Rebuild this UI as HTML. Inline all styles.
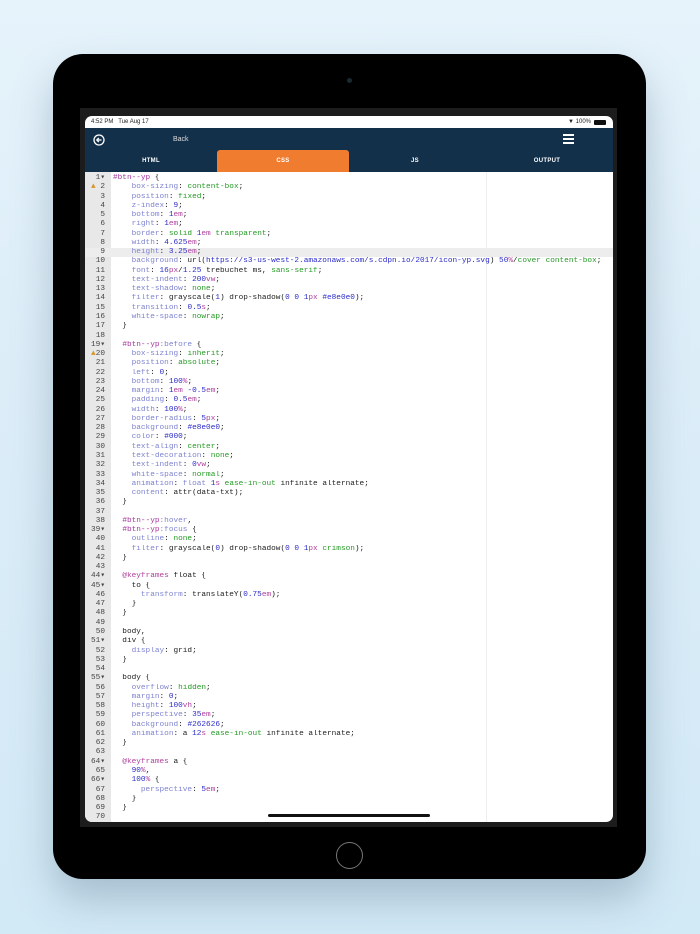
<!DOCTYPE html>
<html><head><meta charset="utf-8"><style>
*{margin:0;padding:0;box-sizing:border-box}
body{width:700px;height:934px;overflow:hidden;background:linear-gradient(180deg,#e6f3fb 0%,#dcedf8 40%,#d2e9f6 100%);font-family:"Liberation Sans",sans-serif;position:relative}
.tab{position:absolute;left:53px;top:54px;width:593px;height:825px;background:#000;border-radius:30px;box-shadow:0 20px 40px rgba(80,110,130,.35)}
.cam{position:absolute;left:347px;top:78px;width:5px;height:5px;border-radius:50%;background:#1a2a30}
.bez{position:absolute;left:80px;top:108px;width:537px;height:719px;background:#1c1c1c}
.scr{position:absolute;left:85px;top:116px;width:528px;height:706px;background:#fff;border-radius:7px;overflow:hidden}
.status{height:12px;font-size:6px;color:#222;line-height:12px;padding-left:6px;position:relative}
.nav{position:absolute;top:12px;left:0;width:528px;height:44px;background:#12304a}
.tabs span{position:absolute;top:22px;height:22px;line-height:22px;text-align:center;color:#fff;font-size:6px;font-weight:bold;letter-spacing:.3px}
.gut{position:absolute;left:0;top:56px;width:26px;height:650px;background:#e8e8e8}
.code{position:absolute;left:0;top:58px;width:528px;font-family:"Liberation Mono",monospace;font-size:7.75px;line-height:9.275px;color:#222}
.code div{height:9.275px;position:relative;white-space:pre;overflow:hidden}
.code i{font-style:normal;display:inline-block;width:20px;text-align:right;color:#444;margin-right:8px}
.code b{font-weight:normal}
.p{color:#7f84d0}.v{color:#259a25}.n{color:#2a2ac8}.u{color:#b0409c}.s{color:#a6379f}
.hl{background:#ededed}
.vl{position:absolute;left:401px;top:56px;width:1px;height:650px;background:#eee}
.home{position:absolute;left:336px;top:842px;width:27px;height:27px;border-radius:50%;border:1.5px solid #777}
.bar{position:absolute;left:183px;top:698px;width:162px;height:3px;border-radius:2px;background:#111}
</style></head><body>
<div class="tab"></div>
<div class="cam"></div>
<div class="bez"></div>
<div class="scr">
<div class="status">4:52 PM&nbsp;&nbsp; Tue Aug 17<span style="position:absolute;right:22px">&#9660; 100%</span><span style="position:absolute;right:7px;top:4px;width:12px;height:5px;background:#111;border-radius:1px"></span></div>
<div class="nav">
<svg style="position:absolute;left:8px;top:6px" width="12" height="12" viewBox="0 0 12 12"><circle cx="6" cy="6" r="5" fill="none" stroke="#fff" stroke-width="1.3"/><path d="M8.5 6H4M5.8 4L3.8 6L5.8 8" fill="none" stroke="#fff" stroke-width="1.3"/></svg>
<span style="position:absolute;left:88px;top:8px;color:#ddd;font-size:7px">Back</span>
<svg style="position:absolute;left:478px;top:6px" width="11" height="10"><rect y="0" width="11" height="2" fill="#fff"/><rect y="4" width="11" height="2" fill="#fff"/><rect y="8" width="11" height="2" fill="#fff"/></svg>
<div class="tabs">
<span style="left:0;width:132px">HTML</span>
<span style="left:132px;width:132px;background:#f07c30;border-radius:3px 3px 0 0">CSS</span>
<span style="left:264px;width:132px">JS</span>
<span style="left:396px;width:132px">OUTPUT</span>
</div></div>
<div class="gut"></div>
<div class="vl"></div>
<div class="code">
<div><i>1▾</i><b class="s">#btn--yp</b> {</div>
<div><i><span style="color:#d9962a">▲</span> 2</i>    <b class="p">box-sizing</b>: <b class="v">content-box</b>;</div>
<div><i>3</i>    <b class="p">position</b>: <b class="v">fixed</b>;</div>
<div><i>4</i>    <b class="p">z-index</b>: <b class="n">9</b>;</div>
<div><i>5</i>    <b class="p">bottom</b>: <b class="n">1</b><b class="u">em</b>;</div>
<div><i>6</i>    <b class="p">right</b>: <b class="n">1</b><b class="u">em</b>;</div>
<div><i>7</i>    <b class="p">border</b>: <b class="v">solid</b> <b class="n">1</b><b class="u">em</b> <b class="v">transparent</b>;</div>
<div><i>8</i>    <b class="p">width</b>: <b class="n">4.625</b><b class="u">em</b>;</div>
<div class="hl"><i>9</i>    <b class="p">height</b>: <b class="n">3.25</b><b class="u">em</b>;</div>
<div><i>10</i>    <b class="p">background</b>: url(<b class="n">https://s3-us-west-2.amazonaws.com/s.cdpn.io/2017/icon-yp.svg</b>) <b class="n">50</b><b class="u">%</b>/<b class="v">cover content-box</b>;</div>
<div><i>11</i>    <b class="p">font</b>: <b class="n">16</b><b class="u">px</b>/<b class="n">1.25</b> trebuchet ms, <b class="v">sans-serif</b>;</div>
<div><i>12</i>    <b class="p">text-indent</b>: <b class="n">200</b><b class="u">vw</b>;</div>
<div><i>13</i>    <b class="p">text-shadow</b>: <b class="v">none</b>;</div>
<div><i>14</i>    <b class="p">filter</b>: grayscale(<b class="n">1</b>) drop-shadow(<b class="n">0 0 1</b><b class="u">px</b> <b class="n">#e8e0e0</b>);</div>
<div><i>15</i>    <b class="p">transition</b>: <b class="n">0.5</b><b class="u">s</b>;</div>
<div><i>16</i>    <b class="p">white-space</b>: <b class="v">nowrap</b>;</div>
<div><i>17</i>  }</div>
<div><i>18</i></div>
<div><i>19▾</i>  <b class="s">#btn--yp</b><b class="p">:before</b> {</div>
<div><i><span style="color:#d9962a">▲</span>20</i>    <b class="p">box-sizing</b>: <b class="v">inherit</b>;</div>
<div><i>21</i>    <b class="p">position</b>: <b class="v">absolute</b>;</div>
<div><i>22</i>    <b class="p">left</b>: <b class="n">0</b>;</div>
<div><i>23</i>    <b class="p">bottom</b>: <b class="n">100</b><b class="u">%</b>;</div>
<div><i>24</i>    <b class="p">margin</b>: <b class="n">1</b><b class="u">em</b> <b class="n">-0.5</b><b class="u">em</b>;</div>
<div><i>25</i>    <b class="p">padding</b>: <b class="n">0.5</b><b class="u">em</b>;</div>
<div><i>26</i>    <b class="p">width</b>: <b class="n">100</b><b class="u">%</b>;</div>
<div><i>27</i>    <b class="p">border-radius</b>: <b class="n">5</b><b class="u">px</b>;</div>
<div><i>28</i>    <b class="p">background</b>: <b class="n">#e8e0e0</b>;</div>
<div><i>29</i>    <b class="p">color</b>: <b class="n">#000</b>;</div>
<div><i>30</i>    <b class="p">text-align</b>: <b class="v">center</b>;</div>
<div><i>31</i>    <b class="p">text-decoration</b>: <b class="v">none</b>;</div>
<div><i>32</i>    <b class="p">text-indent</b>: <b class="n">0</b><b class="u">vw</b>;</div>
<div><i>33</i>    <b class="p">white-space</b>: <b class="v">normal</b>;</div>
<div><i>34</i>    <b class="p">animation</b>: <b class="p">float</b> <b class="n">1</b><b class="u">s</b> <b class="v">ease-in-out</b> infinite alternate;</div>
<div><i>35</i>    <b class="p">content</b>: attr(data-txt);</div>
<div><i>36</i>  }</div>
<div><i>37</i></div>
<div><i>38</i>  <b class="s">#btn--yp</b><b class="p">:hover</b>,</div>
<div><i>39▾</i>  <b class="s">#btn--yp</b><b class="p">:focus</b> {</div>
<div><i>40</i>    <b class="p">outline</b>: <b class="v">none</b>;</div>
<div><i>41</i>    <b class="p">filter</b>: grayscale(<b class="n">0</b>) drop-shadow(<b class="n">0 0 1</b><b class="u">px</b> <b class="v">crimson</b>);</div>
<div><i>42</i>  }</div>
<div><i>43</i></div>
<div><i>44▾</i>  <b class="u">@keyframes</b> float {</div>
<div><i>45▾</i>    to {</div>
<div><i>46</i>      <b class="p">transform</b>: translateY(<b class="n">0.75</b><b class="u">em</b>);</div>
<div><i>47</i>    }</div>
<div><i>48</i>  }</div>
<div><i>49</i></div>
<div><i>50</i>  body,</div>
<div><i>51▾</i>  div {</div>
<div><i>52</i>    <b class="p">display</b>: grid;</div>
<div><i>53</i>  }</div>
<div><i>54</i></div>
<div><i>55▾</i>  body {</div>
<div><i>56</i>    <b class="p">overflow</b>: <b class="v">hidden</b>;</div>
<div><i>57</i>    <b class="p">margin</b>: <b class="n">0</b>;</div>
<div><i>58</i>    <b class="p">height</b>: <b class="n">100</b><b class="u">vh</b>;</div>
<div><i>59</i>    <b class="p">perspective</b>: <b class="n">35</b><b class="u">em</b>;</div>
<div><i>60</i>    <b class="p">background</b>: <b class="n">#262626</b>;</div>
<div><i>61</i>    <b class="p">animation</b>: a <b class="n">12</b><b class="u">s</b> <b class="v">ease-in-out</b> infinite alternate;</div>
<div><i>62</i>  }</div>
<div><i>63</i></div>
<div><i>64▾</i>  <b class="u">@keyframes</b> a {</div>
<div><i>65</i>    <b class="n">90</b><b class="u">%</b>,</div>
<div><i>66▾</i>    <b class="n">100</b><b class="u">%</b> {</div>
<div><i>67</i>      <b class="p">perspective</b>: <b class="n">5</b><b class="u">em</b>;</div>
<div><i>68</i>    }</div>
<div><i>69</i>  }</div>
<div><i>70</i></div>
</div>
<div class="bar"></div>
</div>
<div class="home"></div>
</body></html>
